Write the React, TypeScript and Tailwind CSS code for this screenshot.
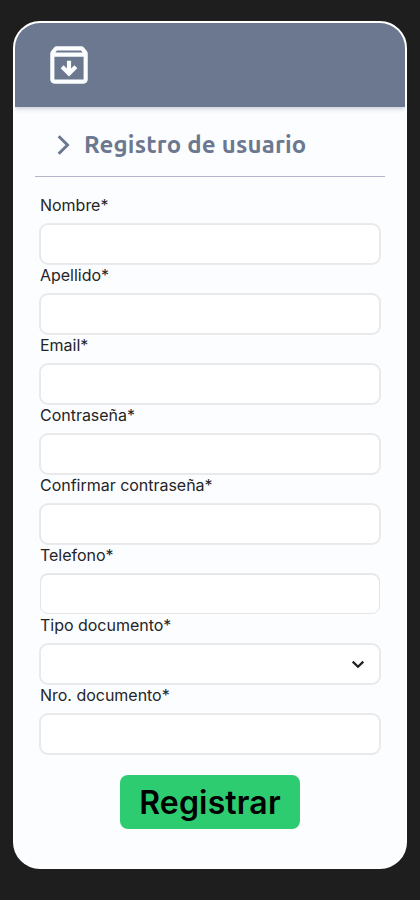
const labels = [
  'Nombre*',
  'Apellido*',
  'Email*',
  'Contraseña*',
  'Confirmar contraseña*',
  'Telefono*',
  'Tipo documento*',
  'Nro. documento*',
];

function Field({ label }: { label: string }) {
  const thin = label === 'Telefono*';
  const select = label === 'Tipo documento*';
  return (
    <label className="block h-[70px]">
      <span className="block h-[31px] pl-[5px] text-[16px] leading-[24px] tracking-[-0.02px] text-[#242528]">{label}</span>
      {select ? (
        <button
          type="button"
          className="ml-[5px] flex h-[40px] w-[340px] items-center justify-end rounded-[8px] border border-[#e8e9eb] bg-white pr-[13px] shadow-[0_0_0_1px_#e9eaec]"
        >
          <svg className="h-4 w-4" viewBox="0 0 16 16" fill="none" stroke="#1f2024" strokeWidth="2.2">
            <path d="M2.7 5.6 8 10.8l5.3-5.2" />
          </svg>
        </button>
      ) : (
        <input
          aria-label={label}
          className={
            thin
              ? 'ml-[5px] block h-[40px] w-[340px] rounded-[8px] border border-[#e4e5e7] bg-white px-3 shadow-[0_-1px_0_0_#e9eaec] outline-none'
              : 'ml-[5px] block h-[40px] w-[340px] rounded-[8px] border border-[#e8e9eb] bg-white px-3 shadow-[0_0_0_1px_#e9eaec] outline-none'
          }
        />
      )}
    </label>
  );
}

export default function App() {
  return (
    <div className="h-[900px] w-[420px] overflow-hidden bg-[#1e1e1e] px-[13px] pt-[21px] font-['Inter',sans-serif]">
      <main className="h-[848px] w-[394px] overflow-hidden rounded-[27px] border-2 border-white bg-[#fcfdff]">
        <header className="flex h-[84px] items-center bg-[#6c788f] pl-[29px] shadow-[0_2px_4px_rgba(108,120,143,0.35)]">
          <svg className="h-[50px] w-[50px]" viewBox="0 0 24 24" fill="#fcfdff">
            <path d="m20.54 5.23-1.39-1.68C18.88 3.21 18.47 3 18 3H6c-.47 0-.88.21-1.16.55L3.46 5.23C3.17 5.57 3 6.02 3 6.5V19c0 1.1.9 2 2 2h14c1.1 0 2-.9 2-2V6.5c0-.48-.17-.93-.46-1.27zM6.24 5h11.52l.83 1H5.42l.82-1zM5 19V8h14v11H5zm11-5.5-4 4-4-4 1.41-1.41L11 13.67V10h2v3.67l1.59-1.59L16 13.5z" />
          </svg>
        </header>
        <div className="mx-[20px] flex h-[70px] items-center border-b border-[#b3b5cb] pt-[7px]">
          <svg className="ml-[20px] h-[20px] w-[16px]" viewBox="0 0 16 20" fill="none" stroke="#6c788f" strokeWidth="3">
            <path d="m3.7 1.2 8.8 8.8-8.8 8.8" />
          </svg>
          <h1 className="ml-[13px] whitespace-nowrap font-['Ubuntu','Noto_Sans',sans-serif] text-[24px] font-bold leading-[30px] tracking-[0.2px] text-[#6c788f]">
            Registro de usuario
          </h1>
        </div>
        <form className="mx-[20px] pt-[16px]">
          {labels.map((label) => (
            <Field key={label} label={label} />
          ))}
          <button
            type="button"
            className="ml-[85px] mt-[22px] flex h-[54px] w-[180px] items-center justify-center rounded-[8px] bg-[#2ecc71] pt-[2px] text-[32px] font-semibold leading-none tracking-[0.15px] text-black"
          >
            Registrar
          </button>
        </form>
      </main>
    </div>
  );
}
